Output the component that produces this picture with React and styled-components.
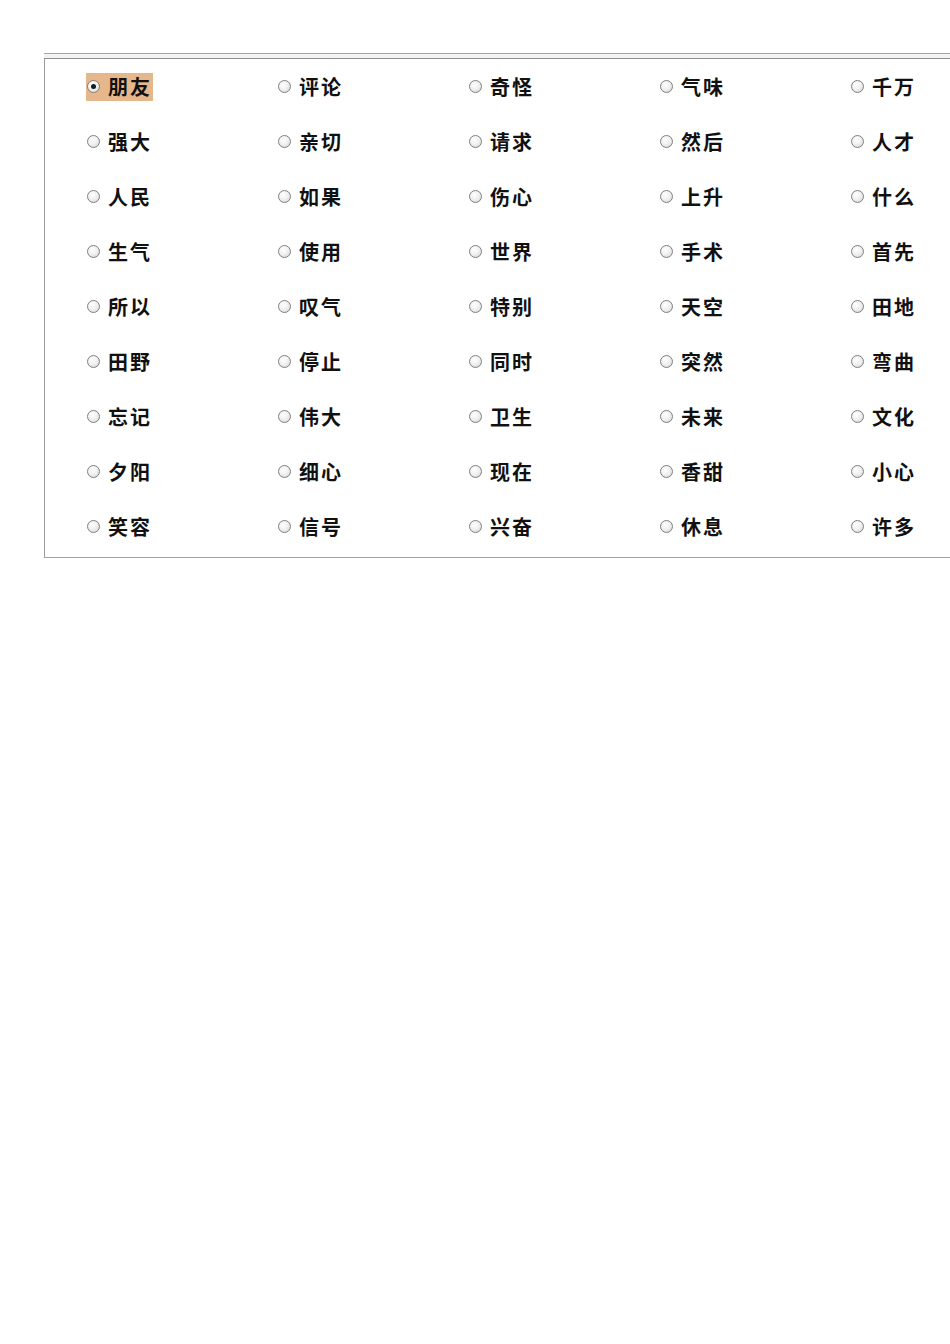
import styled, { createGlobalStyle } from "styled-components";

const words = [
    "朋友", "评论", "奇怪", "气味", "千万",
    "强大", "亲切", "请求", "然后", "人才",
    "人民", "如果", "伤心", "上升", "什么",
    "生气", "使用", "世界", "手术", "首先",
    "所以", "叹气", "特别", "天空", "田地",
    "田野", "停止", "同时", "突然", "弯曲",
    "忘记", "伟大", "卫生", "未来", "文化",
    "夕阳", "细心", "现在", "香甜", "小心",
    "笑容", "信号", "兴奋", "休息", "许多",
];

const GlobalStyle = createGlobalStyle`
    html, body {
        margin: 0;
        padding: 0;
        background: #ffffff;
        overflow-x: hidden;
    }
    body {
        font-family: "Noto Sans CJK SC", "Noto Sans", sans-serif;
    }
`;

export default function App(){
    return (
        <Page>
            <GlobalStyle />
            <TopStrip />
            <Panel>
                <Grid>
                    {words.map((w, i) => (
                        <Cell key={w + i}>
                            <Choice selected={i === 0}>
                                <Radio selected={i === 0} />
                                <Word>{w}</Word>
                            </Choice>
                        </Cell>
                    ))}
                </Grid>
            </Panel>
        </Page>
    );
}

const Page = styled.div`
    margin-left: 44px;
    padding-top: 53px;
`;

const TopStrip = styled.div`
    height: 4px;
    border-top: 1px solid #a6a6a6;
    border-bottom: 1px solid #8e8e8e;
    background: #f3f3f1;
`;

const Panel = styled.div`
    border-left: 1px solid #9c9c9c;
    border-bottom: 1px solid #a2a2a2;
    padding: 0 0 3px 41px;
`;

const Grid = styled.div`
    display: grid;
    grid-template-columns: repeat(4, 191px) 1fr;
    grid-auto-rows: 55px;
`;

const Cell = styled.div`
    display: flex;
    align-items: center;
`;

const Choice = styled.label`
    display: flex;
    align-items: center;
    gap: 8px;
    height: 28px;
    padding: 0 1px;
    background: ${p => (p.selected ? "#e7b78c" : "transparent")};
`;

const Radio = styled.span`
    position: relative;
    box-sizing: border-box;
    width: 13px;
    height: 13px;
    border-radius: 50%;
    border: 1px solid #7f7f7f;
    background: radial-gradient(circle at 40% 35%, #ffffff 0%, #f1f1f1 45%, #d2d2d2 100%);
    flex-shrink: 0;

    &::after {
        content: "";
        display: ${p => (p.selected ? "block" : "none")};
        position: absolute;
        left: 3px;
        top: 3px;
        width: 5px;
        height: 5px;
        border-radius: 50%;
        background: #1a1a1a;
    }
`;

const Word = styled.span`
    font-family: "Noto Sans CJK SC", "Noto Sans", sans-serif;
    font-size: 20px;
    font-weight: 700;
    letter-spacing: 2px;
    line-height: 28px;
    color: #111111;
`;
